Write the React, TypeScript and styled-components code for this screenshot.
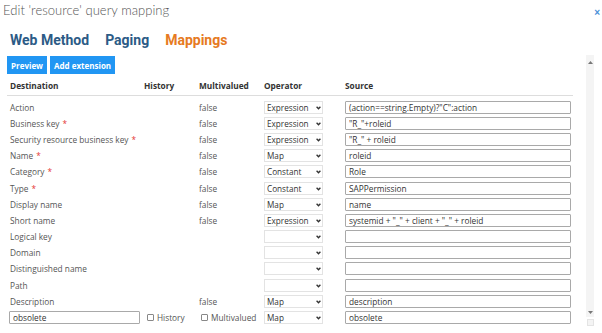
import styled, { createGlobalStyle } from "styled-components";

const GlobalStyle = createGlobalStyle`
  html, body {
    margin: 0;
    padding: 0;
    background: #fff;
  }
  body {
    font-family: "Open Sans", "Noto Sans", "Liberation Sans", sans-serif;
    color: #444;
  }
`;

const Dialog = styled.div`
  width: 602px;
  height: 333px;
  overflow: hidden;
  display: flex;
  flex-direction: column;
  background: #fff;
`;

const TitleBar = styled.div`
  display: flex;
  align-items: center;
  justify-content: space-between;
  height: 20px;
  padding: 0 2px 0 3px;
`;

const Title = styled.h1`
  margin: 0;
  font-family: "Lato", "Open Sans", sans-serif;
  font-weight: 300;
  font-size: 13px;
  color: #555;
  letter-spacing: 0.05px;
`;

const Close = styled.span`
  font-family: "Liberation Sans", sans-serif;
  font-size: 10px;
  font-weight: bold;
  color: #4a90d9;
  margin-top: 4px;
`;

const Body = styled.div`
  display: flex;
  flex: 1;
  min-height: 0;
`;

const Content = styled.div`
  flex: 1;
  padding: 0 0 0 7px;
`;

const Tabs = styled.div`
  display: flex;
  gap: 16px;
  padding: 12px 0 0 3px;
  height: 24px;
`;

const Tab = styled.span<{ $active?: boolean }>`
  font-family: "Roboto", "Open Sans", sans-serif;
  font-weight: 700;
  font-size: 14px;
  color: ${(p) => (p.$active ? "#e67a22" : "#2c5b86")};
`;

const Toolbar = styled.div`
  display: flex;
  gap: 3px;
`;

const Button = styled.button`
  height: 18px;
  padding: 0 4px;
  border: none;
  background: #2196f3;
  color: #fff;
  font-family: "Open Sans", sans-serif;
  font-weight: 700;
  font-size: 8px;
  cursor: pointer;
`;

const Grid = styled.div`
  display: grid;
  grid-template-columns: 134px 55px 65px 81px 231px;
  grid-template-rows: 23px;
  grid-auto-rows: 16.2px;
  margin-top: 2px;
  width: 566px;
`;

const Head = styled.div`
  align-self: start;
  font-weight: 700;
  font-size: 8.3px;
  color: #333;
  padding: 0 0 0 3px;
  height: 20px;
  line-height: 19px;
  border-bottom: 1px solid #ddd;
  box-sizing: border-box;
`;

const Cell = styled.div<{ $pad?: number }>`
  font-size: 8.3px;
  color: #555;
  display: flex;
  align-items: center;
  padding-left: ${(p) => p.$pad ?? 3}px;
  white-space: nowrap;
`;

const Star = styled.span`
  color: #e53935;
  margin-left: 3px;
`;

const SelectWrap = styled.div`
  position: relative;
  width: 59px;
  height: 13px;
`;

const Select = styled.select`
  appearance: none;
  width: 100%;
  height: 100%;
  border: 1px solid #e3e3e3;
  background: #fff;
  font-family: "Open Sans", sans-serif;
  font-size: 8.2px;
  color: #333;
  padding: 0 0 0 2px;
  margin: 0;
  outline: none;
`;

const Chevron = styled.svg`
  position: absolute;
  right: 2px;
  top: 5px;
  pointer-events: none;
`;

const TextInput = styled.input<{ $w: number }>`
  width: ${(p) => p.$w}px;
  height: 13px;
  box-sizing: border-box;
  border: 1px solid #a9a9a9;
  border-radius: 1px;
  font-family: "Open Sans", sans-serif;
  font-size: 8.3px;
  color: #333;
  padding: 0 3px;
  margin: 0;
  outline: none;
`;

const CheckLabel = styled.label`
  display: flex;
  align-items: center;
  gap: 3px;
  font-size: 8.3px;
  color: #555;
`;

const Check = styled.input`
  appearance: none;
  width: 7px;
  height: 7px;
  margin: 0;
  border: 1px solid #888;
  border-radius: 1px;
  background: #fff;
`;

const ScrollBar = styled.div`
  width: 8px;
  margin: 35px 8px 0 0;
  display: flex;
  flex-direction: column;
  align-items: center;
`;

const Track = styled.div`
  flex: 1;
  width: 8px;
  background: #f4f4f4;
  display: flex;
  flex-direction: column;
  align-items: center;
  justify-content: space-between;
  padding: 6px 0 3px;
  box-sizing: border-box;
`;

const Grip = styled.div`
  width: 7px;
  height: 7px;
  margin: 2px 0 7px;
  background: #f4f4f4;
  border: 1px solid #e4e4e4;
  box-sizing: border-box;
`;

type Row = {
  name: string;
  req?: boolean;
  mv?: boolean;
  op: string;
  src: string;
};

const rows: Row[] = [
  { name: "Action", mv: true, op: "Expression", src: '(action==string.Empty)?"C":action' },
  { name: "Business key", req: true, mv: true, op: "Expression", src: '"R_"+roleid' },
  { name: "Security resource business key", req: true, mv: true, op: "Expression", src: '"R_" + roleid' },
  { name: "Name", req: true, mv: true, op: "Map", src: "roleid" },
  { name: "Category", req: true, mv: true, op: "Constant", src: "Role" },
  { name: "Type", req: true, mv: true, op: "Constant", src: "SAPPermission" },
  { name: "Display name", mv: true, op: "Map", src: "name" },
  { name: "Short name", mv: true, op: "Expression", src: 'systemid + "_" + client + "_" + roleid' },
  { name: "Logical key", op: "", src: "" },
  { name: "Domain", op: "", src: "" },
  { name: "Distinguished name", op: "", src: "" },
  { name: "Path", op: "", src: "" },
  { name: "Description", mv: true, op: "Map", src: "description" },
];

function OperatorSelect({ value }: { value: string }) {
  return (
    <SelectWrap>
      <Select defaultValue={value}>
        <option value=""></option>
        <option value="Expression">Expression</option>
        <option value="Map">Map</option>
        <option value="Constant">Constant</option>
      </Select>
      <Chevron width="5" height="4" viewBox="0 0 5 4">
        <path d="M0.6 0.7 L2.5 2.8 L4.4 0.7" fill="none" stroke="#333" strokeWidth="1.3" />
      </Chevron>
    </SelectWrap>
  );
}

export default function App() {
  return (
    <Dialog>
      <GlobalStyle />
      <TitleBar>
        <Title>Edit 'resource' query mapping</Title>
        <Close>×</Close>
      </TitleBar>
      <Body>
        <Content>
          <Tabs>
            <Tab>Web Method</Tab>
            <Tab>Paging</Tab>
            <Tab $active>Mappings</Tab>
          </Tabs>
          <Toolbar>
            <Button>Preview</Button>
            <Button>Add extension</Button>
          </Toolbar>
          <Grid>
            <Head>Destination</Head>
            <Head>History</Head>
            <Head>Multivalued</Head>
            <Head>Operator</Head>
            <Head>Source</Head>
            {rows.flatMap((r) => [
              <Cell key={r.name + "n"}>
                {r.name}
                {r.req && <Star>*</Star>}
              </Cell>,
              <Cell key={r.name + "h"} />,
              <Cell key={r.name + "m"}>{r.mv ? "false" : ""}</Cell>,
              <Cell key={r.name + "o"}>
                <OperatorSelect value={r.op} />
              </Cell>,
              <Cell key={r.name + "s"}>
                <TextInput $w={226} defaultValue={r.src} />
              </Cell>,
            ])}
            <Cell $pad={2}>
              <TextInput $w={131} defaultValue="obsolete" />
            </Cell>
            <Cell $pad={6}>
              <CheckLabel>
                <Check type="checkbox" />
                History
              </CheckLabel>
            </Cell>
            <Cell $pad={5}>
              <CheckLabel>
                <Check type="checkbox" />
                Multivalued
              </CheckLabel>
            </Cell>
            <Cell>
              <OperatorSelect value="Map" />
            </Cell>
            <Cell>
              <TextInput $w={226} defaultValue="obsolete" />
            </Cell>
          </Grid>
        </Content>
        <ScrollBar>
          <Track>
            <svg width="5" height="3" viewBox="0 0 5 3">
              <path d="M0 3 L2.5 0 L5 3 Z" fill="#777" />
            </svg>
            <svg width="5" height="3" viewBox="0 0 5 3">
              <path d="M0 0 L2.5 3 L5 0 Z" fill="#777" />
            </svg>
          </Track>
          <Grip />
        </ScrollBar>
      </Body>
    </Dialog>
  );
}
